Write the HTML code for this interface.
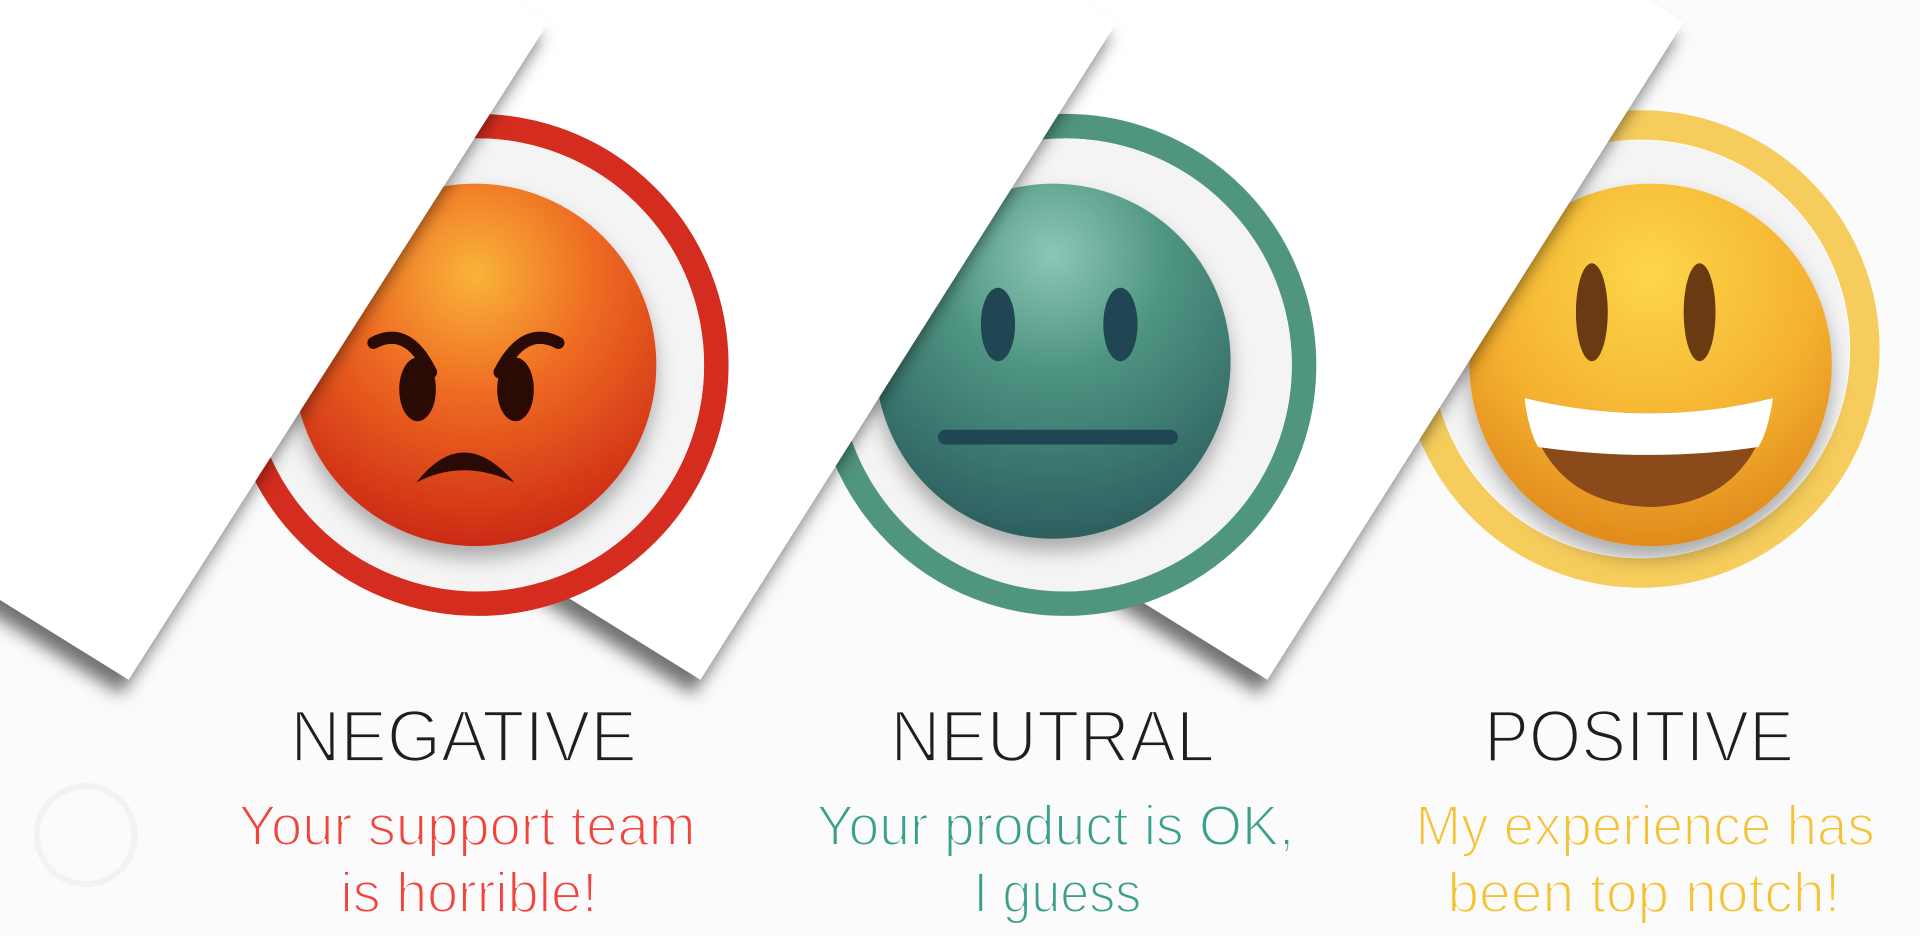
<!DOCTYPE html>
<html><head><meta charset="utf-8"><style>
html,body{margin:0;padding:0;background:#fbfbfb;width:1920px;height:936px;overflow:hidden}
svg{display:block}
text{font-family:"Liberation Sans",sans-serif}
</style></head><body>
<svg width="1920" height="936" viewBox="0 0 1568 764.4" xmlns="http://www.w3.org/2000/svg">
<defs>
<filter id="sh" x="-50%" y="-50%" width="200%" height="200%"><feDropShadow dx="-6" dy="12" stdDeviation="7" flood-color="#000" flood-opacity="0.55"/></filter>
<filter id="fs" x="-30%" y="-30%" width="160%" height="160%"><feDropShadow dx="0" dy="10" stdDeviation="8" flood-color="#000" flood-opacity="0.3"/></filter>
<radialGradient id="gN" cx="50%" cy="25%" r="75%"><stop offset="0" stop-color="#f9b43a"/><stop offset="0.45" stop-color="#ee6a22"/><stop offset="1" stop-color="#cc2a15"/></radialGradient>
<radialGradient id="gU" cx="50%" cy="20%" r="80%"><stop offset="0" stop-color="#8cc7b6"/><stop offset="0.4" stop-color="#4f9582"/><stop offset="1" stop-color="#2d5f60"/></radialGradient>
<radialGradient id="gP" cx="50%" cy="25%" r="75%"><stop offset="0" stop-color="#fcd64a"/><stop offset="0.6" stop-color="#f5b230"/><stop offset="1" stop-color="#e08a1c"/></radialGradient>
</defs>
<rect width="1568" height="765" fill="#fbfbfb"/>

<!-- emoji 3 -->
<circle cx="1340" cy="285" r="183" fill="none" stroke="#f6cd5c" stroke-width="24"/>
<circle cx="1340" cy="285" r="170" fill="#f4f4f4"/>
<circle cx="1348" cy="298" r="148" fill="url(#gP)" filter="url(#fs)"/>
<ellipse cx="1300" cy="255" rx="13" ry="40" fill="#6a3a12"/>
<ellipse cx="1388" cy="255" rx="13" ry="40" fill="#6a3a12"/>
<path d="M1245 325 Q1348 350 1448 325 Q1430 412 1348 414 Q1262 412 1245 325 Z" fill="#8a4a1a"/>
<path d="M1245 325 Q1348 350 1448 325 Q1444 352 1436 365 Q1348 378 1256 365 Q1248 350 1245 325 Z" fill="#fff"/>
<!-- paper 3 -->
<polygon points="1375,18 1035,555 330,118 670,-419" fill="#fff" filter="url(#sh)"/>

<!-- emoji 2 -->
<circle cx="870" cy="298" r="195" fill="none" stroke="#4f9580" stroke-width="20"/>
<circle cx="870" cy="298" r="185" fill="#f4f4f4"/>
<circle cx="860" cy="295" r="145" fill="url(#gU)" filter="url(#fs)"/>
<ellipse cx="815" cy="265" rx="14" ry="30" fill="#1f4652"/>
<ellipse cx="915" cy="265" rx="14" ry="30" fill="#1f4652"/>
<rect x="766" y="351" width="196" height="12" rx="6" fill="#1f4652"/>
<!-- paper 2 -->
<polygon points="912,18 572,555 -133,118 207,-419" fill="#fff" filter="url(#sh)"/>

<!-- emoji 1 -->
<circle cx="390" cy="298" r="195" fill="none" stroke="#d42c1e" stroke-width="20"/>
<circle cx="390" cy="298" r="185" fill="#f4f4f4"/>
<circle cx="388" cy="298" r="148" fill="url(#gN)" filter="url(#fs)"/>
<ellipse cx="341" cy="318" rx="15" ry="26" fill="#2a0a04"/>
<ellipse cx="421" cy="318" rx="15" ry="26" fill="#2a0a04"/>
<path d="M305 280 Q333 265 352 304" stroke="#2a0a04" stroke-width="10" fill="none" stroke-linecap="round"/>
<path d="M456 280 Q428 265 408 304" stroke="#2a0a04" stroke-width="10" fill="none" stroke-linecap="round"/>
<path d="M340 394 Q378 345 420 394 Q378 374 340 394 Z" fill="#2a0a04"/>
<!-- paper 1 -->
<polygon points="448,18 105,555 -600,118 -257,-419" fill="#fff" filter="url(#sh)"/>

<!-- watermark -->
<circle cx="70" cy="682" r="40" fill="none" stroke="#f0f2f5" stroke-width="5"/>

<g stroke="#fbfbfb" stroke-width="2.2">
<text x="237" y="622" font-size="60" fill="#1e1e1e" textLength="283" lengthAdjust="spacingAndGlyphs">NEGATIVE</text>
<text x="727" y="622" font-size="60" fill="#1e1e1e" textLength="265" lengthAdjust="spacingAndGlyphs">NEUTRAL</text>
<text x="1212" y="622" font-size="60" fill="#1e1e1e" textLength="253" lengthAdjust="spacingAndGlyphs">POSITIVE</text>
</g>
<g stroke="#fbfbfb" stroke-width="1.6">
<text x="195" y="690" font-size="46" fill="#f0443c" textLength="373" lengthAdjust="spacingAndGlyphs">Your support team</text>
<text x="278" y="745" font-size="46" fill="#f0443c" textLength="210" lengthAdjust="spacingAndGlyphs">is horrible!</text>
<text x="667" y="690" font-size="46" fill="#3aa08c" textLength="390" lengthAdjust="spacingAndGlyphs">Your product is OK,</text>
<text x="795" y="745" font-size="46" fill="#3aa08c" textLength="137" lengthAdjust="spacingAndGlyphs">I guess</text>
<text x="1156" y="690" font-size="46" fill="#f6c232" textLength="375" lengthAdjust="spacingAndGlyphs">My experience has</text>
<text x="1182" y="745" font-size="46" fill="#f6c232" textLength="321" lengthAdjust="spacingAndGlyphs">been top notch!</text>
</g>
</svg>
</body></html>
